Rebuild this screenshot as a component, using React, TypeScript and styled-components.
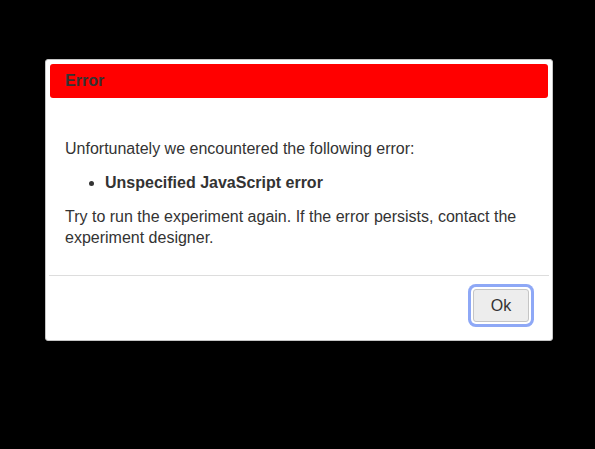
import React from 'react'
import styled, { createGlobalStyle } from 'styled-components'

const GlobalStyle = createGlobalStyle`
    html, body {
        margin: 0;
        padding: 0;
        background: #000;
    }
    body {
        font-family: "Liberation Sans", Arial, sans-serif;
    }
`

const Screen = styled.div`
    width: 595px;
    height: 449px;
    background: #000;
    padding: 59px 0 0 45px;
    box-sizing: border-box;
`

const Dialog = styled.div`
    width: 508px;
    box-sizing: border-box;
    background: #fff;
    border: 1px solid #c5c5c5;
    border-radius: 3px;
    padding: 4px;
    display: flex;
    flex-direction: column;
`

const TitleBar = styled.div`
    height: 34px;
    box-sizing: border-box;
    background: #ff0000;
    border-radius: 3px;
    padding: 0 15px;
    display: flex;
    align-items: center;
`

const Title = styled.span`
    color: #333;
    font-size: 16px;
    font-weight: bold;
`

const Content = styled.div`
    padding: 40px 15px 27px;
    display: flex;
    flex-direction: column;
    gap: 13px;
    color: #333;
    font-size: 16px;
    line-height: 21px;
`

const Text = styled.p`
    margin: 0;
`

const ErrorList = styled.ul`
    margin: 0;
    padding: 0 0 0 40px;
    font-weight: bold;
`

const ButtonPane = styled.div`
    border-top: 1px solid #dddddd;
    margin: 0 -1px;
    padding: 13px 20px 14px;
    display: flex;
    justify-content: flex-end;
`

const Button = styled.button`
    width: 56px;
    height: 33px;
    box-sizing: border-box;
    background: #ededed;
    border: 1px solid #c5c5c5;
    border-radius: 3px;
    color: #333;
    font-family: "Liberation Sans", Arial, sans-serif;
    font-size: 16px;
    padding: 0;
    cursor: pointer;
    box-shadow: 0 0 0 2px #fff, 0 0 0 5px #8ea8f6;
`

export default function App() {
    return (
        <>
            <GlobalStyle />
            <Screen>
                <Dialog role="dialog">
                    <TitleBar>
                        <Title>Error</Title>
                    </TitleBar>
                    <Content>
                        <Text>Unfortunately we encountered the following error:</Text>
                        <ErrorList>
                            <li>Unspecified JavaScript error</li>
                        </ErrorList>
                        <Text>
                            Try to run the experiment again. If the error persists, contact the experiment designer.
                        </Text>
                    </Content>
                    <ButtonPane>
                        <Button>Ok</Button>
                    </ButtonPane>
                </Dialog>
            </Screen>
        </>
    )
}
